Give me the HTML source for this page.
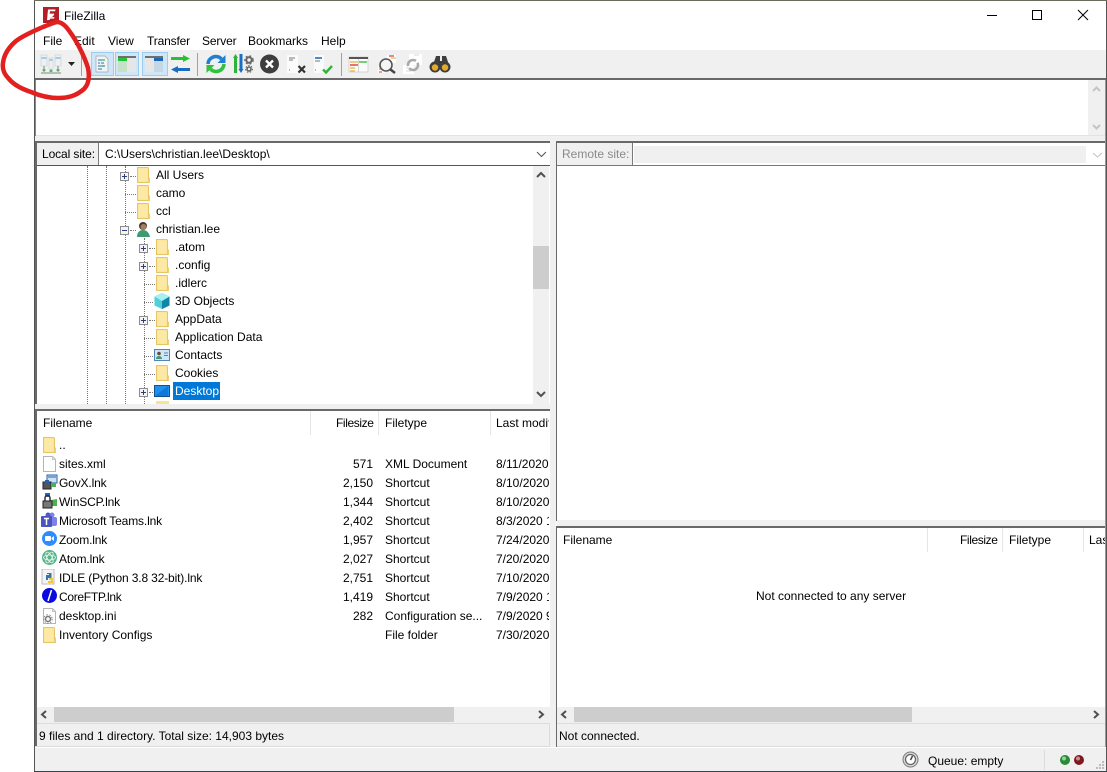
<!DOCTYPE html>
<html><head><meta charset="utf-8"><style>
html,body{margin:0;padding:0;background:#fff}
#r{position:relative;width:1107px;height:772px;overflow:hidden;background:#fff;font:12px "Liberation Sans",sans-serif;color:#000}
#r div,#r svg{position:absolute}
.t{white-space:nowrap;line-height:16px;height:16px}
.n{letter-spacing:-.15px}
.g{background:#f0f0f0}
.d{background:#696969}
.b{border-left:1px dotted #777;width:0}
.h{border-top:1px dotted #777;height:0}
.s{width:7px;height:7px;border:1px solid #8c8c8c;background:#f4f4f4;box-sizing:content-box;margin-top:1px}
.s:before{content:"";position:absolute;left:1px;top:3px;width:5px;height:1px;background:#2b3f7e}
.p:after{content:"";position:absolute;left:3px;top:1px;width:1px;height:5px;background:#2b3f7e}
.v{width:1px;background:#e5e5e5}
</style></head><body><div id="r">
<svg width="0" height="0" style="left:0;top:0"><defs>
<symbol id="f" viewBox="0 0 13 16"><path d="M.5.5h10.500l.5 1v14H.5z" fill="#fce38f" stroke="#e8c564"/><path d="M11.500 11h1.200v4.500h-1.200z" fill="#fce38f" stroke="#e8c564" stroke-width=".7"/><path d="M1.500 1.500h9v13h-9z" fill="#fde9a6"/></symbol>
<symbol id="fl" viewBox="0 0 13 16"><path d="M.5.5h9l3 3v12H.5z" fill="#fff" stroke="#b5b5b5"/><path d="M9.500.5v3h3" stroke="#c5c5c5" fill="none"/></symbol>
</defs></svg>

<!-- window frame -->
<div style="left:34px;top:0;width:1073px;height:772px;background:#fff;border-left:1px solid #555;border-right:1px solid #555;box-sizing:border-box"></div>
<div style="left:34px;top:0;width:1073px;height:1px;background:#6b6b5e"></div>
<div style="left:34px;top:771px;width:1073px;height:1px;background:#35454e"></div>

<!-- title -->
<svg style="left:43px;top:7px" width="16" height="16" viewBox="0 0 16 16"><rect width="16" height="16" fill="#b31f24"/><path d="M5 2.500h7.500l-.4 1.800H7l-.4 2.300h4.600l-.3 1.500-4.600 4.900-2.300.1z" fill="#fff"/><path d="M7.500 10h4l-.4 1.800H6.500l-.5.500z" fill="#f3d9d9"/></svg>
<div class="t" style="left:64px;top:8px">FileZilla</div>
<svg style="left:985px;top:8px" width="110" height="16" viewBox="0 0 110 16" fill="none" stroke="#000"><path d="M2 7.500h10"/><rect x="47.500" y="2.500" width="9" height="9"/><path d="M93 2l10 10M103 2L93 12"/></svg>

<!-- menu -->
<div class="t" style="left:43px;top:33px">File</div>
<div class="t" style="left:74px;top:33px">Edit</div>
<div class="t" style="left:108px;top:33px">View</div>
<div class="t n" style="left:147px;top:33px">Transfer</div>
<div class="t n" style="left:202px;top:33px">Server</div>
<div class="t" style="left:248px;top:33px">Bookmarks</div>
<div class="t" style="left:321px;top:33px">Help</div>

<!-- toolbar -->
<div class="g" style="left:35px;top:50px;width:1071px;height:28px"></div>
<div class="d" style="left:35px;top:78px;width:1071px;height:2px"></div>
<svg style="left:36px;top:51px" width="430" height="26" viewBox="0 0 430 26">
 <!-- site manager -->
 <g fill="#eef1f3" stroke="#c6cfd3" stroke-width=".6"><rect x="5" y="4" width="6" height="11"/><rect x="13" y="7" width="4" height="11"/><rect x="19" y="4" width="6" height="11"/></g>
 <path d="M5.500 7h5M13.500 9h3M19.500 7h5" stroke="#7fb3dd" stroke-width="1.300"/>
 <path d="M5 22h20M8 15v6M15 18v3M22 15v6" stroke="#7c877d" fill="none"/><path d="M6.500 19h3M13.500 20h3M20.500 19h3" stroke="#3bb54a" stroke-width="1.500"/>
 <path d="M32 11h7l-3.500 4z" fill="#222"/>
 <rect x="45" y="2" width="1" height="23" fill="#a0a0a0"/>
 <!-- pressed buttons -->
 <g fill="#cde6f8" stroke="#9bcdf2"><rect x="55.500" y="1.500" width="22" height="23"/><rect x="79.500" y="1.500" width="23" height="23"/><rect x="106.500" y="1.500" width="25" height="23"/></g>
 <path d="M60 5h9l3 3v13H60z" fill="#f3f3f3" stroke="#9ea5ab" stroke-width=".7"/><path d="M62 9h4M62 12h2M65 12h3M62 15h7M62 18h4" stroke="#4a8ec9" stroke-width="1.200"/><path d="M66 9h3M66 15h2" stroke="#3bb54a" stroke-width="1.200"/>
 <rect x="82" y="5" width="18" height="16" fill="#e6e6e6"/><rect x="82" y="5" width="18" height="2" fill="#6f6f6f"/><rect x="82" y="7" width="9" height="3" fill="#27c231"/><rect x="82" y="10" width="9" height="11" fill="#c5e1c8"/>
 <rect x="109" y="5" width="18" height="16" fill="#e6e6e6"/><rect x="109" y="5" width="18" height="2" fill="#6f6f6f"/><rect x="118" y="7" width="9" height="3" fill="#1b68b8"/><rect x="118" y="10" width="9" height="11" fill="#c6d6e4"/>
 <path d="M135 6h12V4l7 3.500-7 3.500V9h-12z" fill="#29c12f"/><path d="M154 17h-12v-2l-7 3.500 7 3.500v-2h12z" fill="#1b6cc0"/>
 <rect x="161" y="2" width="1" height="23" fill="#a0a0a0"/>
 <!-- refresh -->
 <path d="M172 13a7.800 7.800 0 0 1 13.500-5" fill="none" stroke="#1f7fd0" stroke-width="3.600"/><path d="M189.500 4v8h-8z" fill="#1f7fd0"/>
 <path d="M188 13a7.800 7.800 0 0 1-13.500 5" fill="none" stroke="#2fc23a" stroke-width="3.600"/><path d="M170.500 22v-8h8z" fill="#2fc23a"/>
 <!-- process queue -->
 <path d="M199.500 6v16" stroke="#2ab53a" stroke-width="3"/><path d="M197 7l2.500-4 2.500 4z" fill="#2ab53a"/><path d="M205 3v16" stroke="#1a6fc2" stroke-width="3"/><path d="M202.500 18l2.500 4 2.500-4z" fill="#1a6fc2"/>
 <circle cx="213" cy="9" r="2.700" fill="none" stroke="#666" stroke-width="2"/><circle cx="213" cy="9" r="4.200" fill="none" stroke="#666" stroke-width="1.200" stroke-dasharray="2 2"/><circle cx="213" cy="18" r="2" fill="none" stroke="#666" stroke-width="1.600"/><circle cx="213" cy="18" r="3.400" fill="none" stroke="#666" stroke-width="1" stroke-dasharray="1.500 1.500"/>
 <!-- cancel -->
 <circle cx="233.500" cy="13" r="9.500" fill="#3e3e3e"/><path d="M230 9.500l7 7M237 9.500l-7 7" stroke="#fff" stroke-width="2.400"/>
 <!-- delete/x -->
 <rect x="251" y="4" width="11" height="18" fill="#fbfbfb"/><path d="M253 7h6M253 9h4M253 19h1" stroke="#777"/><path d="M262.500 15l6.500 6.500M269 15l-6.500 6.500" stroke="#333" stroke-width="2.200"/>
 <rect x="278" y="4" width="10" height="18" fill="#fbfbfb"/><path d="M279 7h7" stroke="#4a8ec9" stroke-width="2"/><path d="M279 10h5M279 19h1" stroke="#777"/><path d="M287 18.500l3 3 6-6.500" stroke="#2fb53a" stroke-width="2.400" fill="none"/>
 <rect x="305" y="2" width="1" height="23" fill="#a0a0a0"/>
 <!-- filter -->
 <rect x="313" y="6" width="19" height="15" fill="#fafafa" stroke="#b5b5b5" stroke-width=".5"/><rect x="313" y="6" width="19" height="2" fill="#555"/><path d="M314 11h8M314 14h6M314 17h5M314 20h5" stroke="#e8b53a" stroke-width="1.300"/><path d="M323 11h8" stroke="#2fb53a" stroke-width="1.300"/><path d="M314 14h8" stroke="#d33" stroke-width="1.300"/><path d="M323 17h8" stroke="#2fb53a" stroke-width="0"/>
 <path d="M322.500 8v13" stroke="#bbb" stroke-width=".6"/>
 <!-- search remote -->
 <path d="M351 4h9v8h-9z" fill="#fff"/><path d="M353 5h5" stroke="#d33" stroke-width="1.200"/><path d="M355 7h5" stroke="#e8b53a" stroke-width="1.200"/>
 <path d="M342 15h7v7h-7z" fill="#fff"/><path d="M343 16h4" stroke="#e8b53a"/><path d="M343 18h4" stroke="#2fb53a"/><path d="M343 21h3" stroke="#d33"/>
 <circle cx="350" cy="14" r="6" fill="#f7f7f7" fill-opacity=".7" stroke="#555" stroke-width="1.600"/><path d="M354.500 18.500l4.500 3.500" stroke="#444" stroke-width="2.400"/>
 <!-- sync -->
 <rect x="373" y="3" width="13" height="11" fill="#fff"/><rect x="367" y="14" width="11" height="9" fill="#fff"/><path d="M378 4h5M375 17h-5M375 20h-5" stroke="#d8d8d8"/><circle cx="377" cy="14" r="5" fill="none" stroke="#a9a9a9" stroke-width="2.600" stroke-dasharray="12 2.500"/>
 <!-- binoculars -->
 <path d="M397 14l3-9h4v5h2V5h4l3 9z" fill="#3e3e3e"/><circle cx="399" cy="16" r="5.500" fill="#3e3e3e"/><circle cx="409" cy="16" r="5.500" fill="#3e3e3e"/><circle cx="399" cy="16.500" r="3.200" fill="#e5a92c"/><circle cx="409" cy="16.500" r="3.200" fill="#e5a92c"/>
</svg>

<!-- message log -->
<div style="left:35px;top:80px;width:1071px;height:56px;background:#fff"></div>
<div style="left:35px;top:135px;width:1071px;height:1px;background:#e3e3e3"></div>
<div style="left:35px;top:80px;width:1px;height:56px;background:#888"></div>
<div class="g" style="left:1088px;top:80px;width:17px;height:55px"></div>
<svg style="left:1088px;top:80px" width="17" height="55" fill="none" stroke="#c4c4c4" stroke-width="2"><path d="M5 11l3.500-3.500L12 11M5 45l3.500 3.500L12 45"/></svg>

<!-- sash -->
<div class="g" style="left:35px;top:136px;width:1071px;height:5px"></div>
<div class="g" style="left:550px;top:136px;width:6px;height:612px"></div>

<!-- local pane frame -->
<div class="d" style="left:35px;top:141px;width:515px;height:2px"></div>
<div class="d" style="left:35px;top:141px;width:2px;height:264px"></div>
<div class="g" style="left:37px;top:143px;width:61px;height:22px;border-right:1px solid #7a7a7a"></div>
<div class="t" style="left:42px;top:146px;letter-spacing:-.1px">Local site:</div>
<div class="t" style="left:105px;top:146px">C:\Users\christian.lee\Desktop\</div>
<div style="left:37px;top:165px;width:513px;height:1px;background:#555"></div>
<svg style="left:533px;top:143px" width="17" height="22" fill="none" stroke="#555" stroke-width="1"><path d="M4 9l4.500 4.500L13 9"/></svg>

<!-- local tree -->
<div class="b" style="left:87px;top:166px;height:238px"></div>
<div class="b" style="left:106px;top:166px;height:238px"></div>
<div class="b" style="left:125px;top:166px;height:238px"></div>
<div class="b" style="left:144px;top:238px;height:166px"></div>
<div class="h" style="left:130px;top:176px;width:6px"></div><div class="h" style="left:125px;top:194px;width:11px"></div><div class="h" style="left:125px;top:212px;width:11px"></div><div class="h" style="left:130px;top:230px;width:6px"></div>
<div class="h" style="left:149px;top:248px;width:6px"></div><div class="h" style="left:149px;top:266px;width:6px"></div><div class="h" style="left:144px;top:284px;width:11px"></div><div class="h" style="left:144px;top:302px;width:9px"></div><div class="h" style="left:149px;top:320px;width:6px"></div><div class="h" style="left:144px;top:338px;width:11px"></div><div class="h" style="left:144px;top:356px;width:9px"></div><div class="h" style="left:144px;top:374px;width:11px"></div><div class="h" style="left:149px;top:392px;width:4px"></div>
<div class="s p" style="left:120px;top:171px"></div>
<div class="s" style="left:120px;top:225px"></div>
<div class="s p" style="left:139px;top:243px"></div>
<div class="s p" style="left:139px;top:261px"></div>
<div class="s p" style="left:139px;top:315px"></div>
<div class="s p" style="left:139px;top:387px"></div>
<svg style="left:137px;top:167px" width="13" height="16"><use href="#f"/></svg>
<svg style="left:137px;top:185px" width="13" height="16"><use href="#f"/></svg>
<svg style="left:137px;top:203px" width="13" height="16"><use href="#f"/></svg>
<svg style="left:136px;top:221px" width="15" height="16" viewBox="0 0 15 16"><path d="M1 16c0-5 3-7 6-7s6 2 7 7z" fill="#3f9a73"/><circle cx="7" cy="5" r="4" fill="#4e3527"/><circle cx="7.500" cy="6" r="3" fill="#a87d5f"/></svg>
<svg style="left:156px;top:239px" width="13" height="16"><use href="#f"/></svg>
<svg style="left:156px;top:257px" width="13" height="16"><use href="#f"/></svg>
<svg style="left:156px;top:275px" width="13" height="16"><use href="#f"/></svg>
<svg style="left:154px;top:293px" width="16" height="16" viewBox="0 0 16 16"><path d="M8 0l7.500 3.500v9L8 16 .5 12.500v-9z" fill="#4fd0d8"/><path d="M8 8l7.500-4.500v9L8 16z" fill="#0f86a8"/><path d="M8 8L.5 3.500 8 0l7.500 3.500z" fill="#a9eef0"/></svg>
<svg style="left:156px;top:311px" width="13" height="16"><use href="#f"/></svg>
<svg style="left:156px;top:329px" width="13" height="16"><use href="#f"/></svg>
<svg style="left:154px;top:349px" width="16" height="12" viewBox="0 0 16 12"><rect x=".5" y=".5" width="15" height="11" fill="#cfe6f7" stroke="#4f86b5"/><circle cx="5" cy="4.500" r="1.800" fill="#6b4a36"/><path d="M2 10c0-2 1.500-3 3-3s3 1 3 3z" fill="#3f9a73"/><path d="M10 4h4M10 6.500h4" stroke="#4f86b5"/></svg>
<svg style="left:156px;top:365px" width="13" height="16"><use href="#f"/></svg>
<svg style="left:154px;top:385px" width="16" height="12" viewBox="0 0 16 12"><rect x=".5" y=".5" width="15" height="11" fill="#1e90f0" stroke="#14508c"/><path d="M1 11L14 1v10z" fill="#0f78d8"/></svg>
<svg style="left:156px;top:401px" width="13" height="3" viewBox="0 0 13 3"><rect width="13" height="3" fill="#fce38f"/></svg>
<div class="t" style="left:156px;top:167px">All Users</div>
<div class="t" style="left:156px;top:185px">camo</div>
<div class="t" style="left:156px;top:203px">ccl</div>
<div class="t" style="left:156px;top:221px">christian.lee</div>
<div class="t" style="left:175px;top:239px">.atom</div>
<div class="t" style="left:175px;top:257px">.config</div>
<div class="t" style="left:175px;top:275px">.idlerc</div>
<div class="t" style="left:175px;top:293px">3D Objects</div>
<div class="t" style="left:175px;top:311px">AppData</div>
<div class="t" style="left:175px;top:329px">Application Data</div>
<div class="t" style="left:175px;top:347px">Contacts</div>
<div class="t" style="left:175px;top:365px">Cookies</div>
<div style="left:173px;top:382px;width:47px;height:18px;background:#0078d7"></div>
<div class="t" style="left:175px;top:383px;color:#fff">Desktop</div>
<!-- tree scrollbar -->
<div class="g" style="left:533px;top:166px;width:16px;height:238px"></div>
<div style="left:533px;top:246px;width:16px;height:43px;background:#cdcdcd"></div>
<svg style="left:533px;top:166px" width="16" height="238" fill="none" stroke="#505050" stroke-width="2"><path d="M4 11l4-4 4 4M4 226l4 4 4-4"/></svg>
<div class="g" style="left:35px;top:404px;width:515px;height:5px"></div>

<!-- local list -->
<div class="d" style="left:35px;top:409px;width:515px;height:2px"></div>
<div class="d" style="left:35px;top:409px;width:2px;height:339px"></div>
<div class="v" style="left:310px;top:411px;height:24px"></div>
<div class="v" style="left:378px;top:411px;height:24px"></div>
<div class="v" style="left:490px;top:411px;height:24px"></div>
<div class="t" style="left:43px;top:415px">Filename</div>
<div class="t" style="left:336px;top:415px;letter-spacing:-.4px">Filesize</div>
<div class="t" style="left:385px;top:415px">Filetype</div>
<div class="t" style="left:496px;top:415px;width:53px;overflow:hidden">Last modified</div>

<svg style="left:43px;top:437px" width="13" height="16"><use href="#f"/></svg>
<svg style="left:43px;top:456px" width="13" height="16"><use href="#fl"/></svg>
<svg style="left:42px;top:474px" width="16" height="16" viewBox="0 0 16 16"><rect x="5" y="1" width="10" height="8" fill="#cfe2f5" stroke="#2461a8"/><path d="M6 3h8" stroke="#2461a8"/><rect x="1" y="8" width="8" height="7" fill="#555" stroke="#223"/><rect x="3" y="6" width="4" height="3" fill="#2461a8"/><rect x="9" y="9" width="5" height="4" fill="#4caf50"/></svg>
<svg style="left:42px;top:493px" width="16" height="16" viewBox="0 0 16 16"><path d="M3 0h5v4H3z" fill="#2a6ab5"/><path d="M9 7l6-1v7H9z" fill="#4caf50"/><path d="M3 8V5a2.500 2.500 0 0 1 5 0v3" fill="none" stroke="#333" stroke-width="1.500"/><rect x="1" y="8" width="9" height="7" fill="#777" stroke="#222"/></svg>
<svg style="left:41px;top:512px" width="16" height="16" viewBox="0 0 16 16"><circle cx="11" cy="3" r="2.500" fill="#7b83eb"/><rect x="8" y="5" width="8" height="9" rx="2" fill="#7b83eb"/><circle cx="7" cy="3" r="2.500" fill="#5059c9"/><rect x="0" y="4" width="11" height="11" rx="1" fill="#4b53bc"/><path d="M3 6.500h5M5.500 6.500v6.500" stroke="#fff" stroke-width="1.500"/></svg>
<svg style="left:42px;top:531px" width="15" height="15" viewBox="0 0 15 15"><circle cx="7.500" cy="7.500" r="7.500" fill="#2d8cff"/><rect x="3" y="5" width="6" height="5" rx="1" fill="#fff"/><path d="M9.500 7l2.500-2v5l-2.500-2z" fill="#fff"/></svg>
<svg style="left:42px;top:550px" width="15" height="15" viewBox="0 0 15 15"><circle cx="7.500" cy="7.500" r="7.500" fill="#55b58a"/><g fill="none" stroke="#e8f7ee" stroke-width=".8"><ellipse cx="7.500" cy="7.500" rx="6" ry="2.500"/><ellipse cx="7.500" cy="7.500" rx="6" ry="2.500" transform="rotate(60 7.500 7.500)"/><ellipse cx="7.500" cy="7.500" rx="6" ry="2.500" transform="rotate(120 7.500 7.500)"/></g></svg>
<svg style="left:41px;top:569px" width="16" height="16" viewBox="0 0 16 16"><rect x="1" y="0" width="12" height="15" fill="#f3f3f3" stroke="#bbb"/><path d="M6 4h4.500v5H7v2H5V6h3V5H6z" fill="#3775a8"/><path d="M8 9h4v5H7v-2h3v-1H8z" fill="#f2c73c"/></svg>
<svg style="left:42px;top:588px" width="15" height="15" viewBox="0 0 15 15"><circle cx="7.500" cy="7.500" r="7.500" fill="#0a0ae0"/><path d="M9.500 2L6 13" stroke="#fff" stroke-width="1.500"/></svg>
<svg style="left:43px;top:608px" width="13" height="16" viewBox="0 0 13 16"><use href="#fl" width="13" height="16"/><circle cx="5" cy="11" r="2.500" fill="#fff" stroke="#777" stroke-width="1.500"/><circle cx="5" cy="11" r="4.200" fill="none" stroke="#888" stroke-dasharray="1.500 1.500"/></svg>
<svg style="left:43px;top:627px" width="13" height="16"><use href="#f"/></svg>

<div class="t" style="left:59px;top:437px">..</div>
<div class="t" style="left:59px;top:456px">sites.xml</div>
<div class="t n" style="left:59px;top:475px">GovX.lnk</div>
<div class="t n" style="left:59px;top:494px">WinSCP.lnk</div>
<div class="t n" style="left:59px;top:513px">Microsoft Teams.lnk</div>
<div class="t n" style="left:59px;top:532px">Zoom.lnk</div>
<div class="t n" style="left:59px;top:551px">Atom.lnk</div>
<div class="t n" style="left:59px;top:570px">IDLE (Python 3.8 32-bit).lnk</div>
<div class="t" style="left:59px;top:589px;letter-spacing:-.3px">CoreFTP.lnk</div>
<div class="t" style="left:59px;top:608px">desktop.ini</div>
<div class="t" style="left:59px;top:627px">Inventory Configs</div>

<div class="t" style="left:323px;top:456px;width:50px;text-align:right">571</div>
<div class="t" style="left:323px;top:475px;width:50px;text-align:right">2,150</div>
<div class="t" style="left:323px;top:494px;width:50px;text-align:right">1,344</div>
<div class="t" style="left:323px;top:513px;width:50px;text-align:right">2,402</div>
<div class="t" style="left:323px;top:532px;width:50px;text-align:right">1,957</div>
<div class="t" style="left:323px;top:551px;width:50px;text-align:right">2,027</div>
<div class="t" style="left:323px;top:570px;width:50px;text-align:right">2,751</div>
<div class="t" style="left:323px;top:589px;width:50px;text-align:right">1,419</div>
<div class="t" style="left:323px;top:608px;width:50px;text-align:right">282</div>

<div class="t" style="left:385px;top:456px">XML Document</div>
<div class="t" style="left:385px;top:475px">Shortcut</div>
<div class="t" style="left:385px;top:494px">Shortcut</div>
<div class="t" style="left:385px;top:513px">Shortcut</div>
<div class="t" style="left:385px;top:532px">Shortcut</div>
<div class="t" style="left:385px;top:551px">Shortcut</div>
<div class="t" style="left:385px;top:570px">Shortcut</div>
<div class="t" style="left:385px;top:589px">Shortcut</div>
<div class="t" style="left:385px;top:608px">Configuration se...</div>
<div class="t" style="left:385px;top:627px">File folder</div>

<div class="t" style="left:496px;top:456px;width:53px;overflow:hidden">8/11/2020</div>
<div class="t" style="left:496px;top:475px;width:53px;overflow:hidden">8/10/2020</div>
<div class="t" style="left:496px;top:494px;width:53px;overflow:hidden">8/10/2020</div>
<div class="t" style="left:496px;top:513px;width:53px;overflow:hidden">8/3/2020 1:00</div>
<div class="t" style="left:496px;top:532px;width:53px;overflow:hidden">7/24/2020</div>
<div class="t" style="left:496px;top:551px;width:53px;overflow:hidden">7/20/2020</div>
<div class="t" style="left:496px;top:570px;width:53px;overflow:hidden">7/10/2020</div>
<div class="t" style="left:496px;top:589px;width:53px;overflow:hidden">7/9/2020 1:00</div>
<div class="t" style="left:496px;top:608px;width:53px;overflow:hidden">7/9/2020 9:00</div>
<div class="t" style="left:496px;top:627px;width:53px;overflow:hidden">7/30/2020</div>

<!-- local hscroll -->
<div class="g" style="left:37px;top:707px;width:513px;height:15px"></div>
<div style="left:54px;top:707px;width:400px;height:15px;background:#cdcdcd"></div>
<svg style="left:37px;top:707px" width="513" height="15" fill="none" stroke="#505050" stroke-width="2"><path d="M9 4L5 7.500 9 11M502 4l4 3.500-4 3.500"/></svg>
<div class="g" style="left:37px;top:722px;width:513px;height:26px"></div>
<div style="left:37px;top:723px;width:513px;height:1px;background:#dcdcdc"></div>
<div style="left:35px;top:746px;width:515px;height:1px;background:#dcdcdc"></div>
<div style="left:549px;top:723px;width:1px;height:24px;background:#dcdcdc"></div>
<div class="t" style="left:39px;top:728px">9 files and 1 directory. Total size: 14,903 bytes</div>

<!-- remote pane -->
<div class="d" style="left:556px;top:141px;width:550px;height:2px"></div>
<div class="d" style="left:556px;top:141px;width:1px;height:380px"></div>
<div class="g" style="left:557px;top:143px;width:75px;height:22px;border-right:1px solid #7a7a7a"></div>
<div class="t" style="left:562px;top:146px;color:#8a8a8a">Remote site:</div>
<div class="g" style="left:634px;top:146px;width:452px;height:17px"></div>
<div style="left:557px;top:165px;width:549px;height:1px;background:#777"></div>
<svg style="left:1089px;top:143px" width="17" height="22" fill="none" stroke="#c0c0c0"><path d="M4 10l4.500 4 4.500-4"/></svg>

<div class="g" style="left:557px;top:520px;width:549px;height:6px"></div>
<div class="d" style="left:556px;top:526px;width:550px;height:2px"></div>
<div class="d" style="left:556px;top:526px;width:1px;height:222px"></div>
<div class="v" style="left:927px;top:528px;height:24px"></div>
<div class="v" style="left:1002px;top:528px;height:24px"></div>
<div class="v" style="left:1083px;top:528px;height:24px"></div>
<div class="t" style="left:563px;top:532px">Filename</div>
<div class="t" style="left:960px;top:532px;letter-spacing:-.4px">Filesize</div>
<div class="t" style="left:1009px;top:532px">Filetype</div>
<div class="t" style="left:1089px;top:532px;width:16px;overflow:hidden">Last</div>
<div class="t" style="left:756px;top:588px">Not connected to any server</div>
<div class="g" style="left:557px;top:707px;width:548px;height:15px"></div>
<div style="left:574px;top:707px;width:338px;height:15px;background:#cdcdcd"></div>
<svg style="left:557px;top:707px" width="548" height="15" fill="none" stroke="#505050" stroke-width="2"><path d="M9 4L5 7.500 9 11M537 4l4 3.500-4 3.500"/></svg>
<div class="g" style="left:557px;top:722px;width:549px;height:26px"></div>
<div style="left:557px;top:723px;width:548px;height:1px;background:#dcdcdc"></div>
<div style="left:557px;top:746px;width:549px;height:1px;background:#dcdcdc"></div>
<div class="t" style="left:559px;top:728px">Not connected.</div>
<div style="left:1105px;top:80px;width:1px;height:668px;background:#999"></div>

<!-- bottom status -->
<div class="g" style="left:35px;top:748px;width:1071px;height:23px"></div>
<div style="left:35px;top:747px;width:1071px;height:1px;background:#fff"></div>
<div style="left:1044px;top:750px;width:1px;height:20px;background:#dcdcdc"></div>
<svg style="left:902px;top:751px" width="17" height="17" viewBox="0 0 17 17"><circle cx="8.500" cy="8.500" r="7.500" fill="#d9d9d9" stroke="#777"/><circle cx="8.500" cy="8.500" r="5" fill="#fff" stroke="#666" stroke-width="1.300"/><path d="M8.500 9l2-4" stroke="#444" stroke-width="1.500"/></svg>
<div class="t" style="left:928px;top:753px">Queue: empty</div>
<svg style="left:1058px;top:753px" width="30" height="14" viewBox="0 0 30 14"><circle cx="7" cy="7" r="5" fill="#2a8a35"/><circle cx="6" cy="5.500" r="2" fill="#8fd69a"/><circle cx="21" cy="7" r="5" fill="#7d1a1f"/><circle cx="20" cy="5.500" r="2" fill="#cf8a8d"/></svg>
<svg style="left:1095px;top:759px" width="10" height="11" fill="#bdbdbd"><rect x="7" y="2" width="2" height="2"/><rect x="4" y="5" width="2" height="2"/><rect x="7" y="5" width="2" height="2"/><rect x="1" y="8" width="2" height="2"/><rect x="4" y="8" width="2" height="2"/><rect x="7" y="8" width="2" height="2"/></svg>

<!-- red hand-drawn circle -->
<svg style="left:0;top:0" width="100" height="105" viewBox="0 0 100 105" fill="none"><path d="M57 22C62 22 66 26 70 32C76 40 84 55 88 68C90 78 88 85 84 89C76 96 68 98 58 98C47 98 38 95 31 92C22 89 14 85 9 79C4 74 2 69 3 63C4 54 9 47 16 41C24 35 34 31 43 27C48 25 53 23 57 22" stroke="#e2201f" stroke-width="4.500" stroke-linecap="round"/></svg>
</div></body></html>
